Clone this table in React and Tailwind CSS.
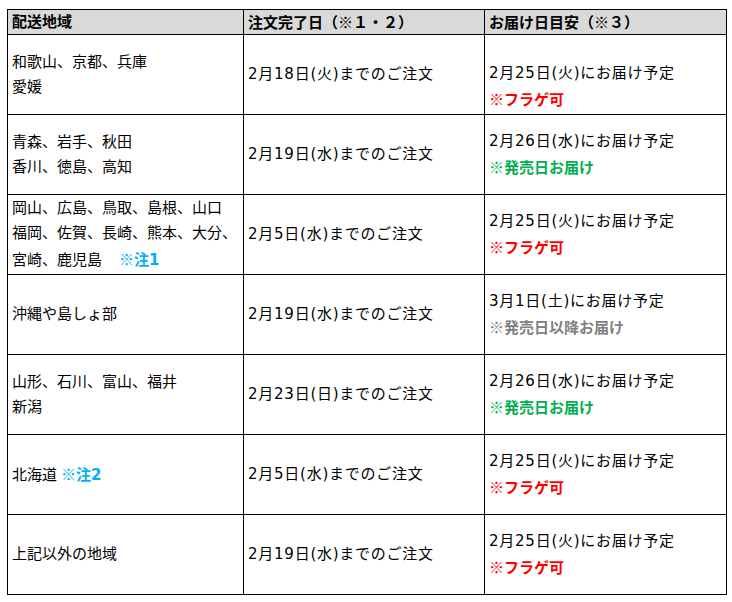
import React from 'react';

// ※ taken from the CJK font so it stays full width
const Mark = () => <span className="font-['Noto_Sans_CJK_JP']">※</span>;

const rows = [
  {
    area: [['和歌山、京都、兵庫'], ['愛媛']],
    deadline: '2月18日(火)までのご注文',
    eta: '2月25日(火)にお届け予定',
    note: { text: 'フラゲ可', color: 'text-[#ff0000]' },
    blankTop: true,
  },
  {
    area: [['青森、岩手、秋田'], ['香川、徳島、高知']],
    deadline: '2月19日(水)までのご注文',
    eta: '2月26日(水)にお届け予定',
    note: { text: '発売日お届け', color: 'text-[#00b050]' },
  },
  {
    area: [['岡山、広島、鳥取、島根、山口'], ['福岡、佐賀、長崎、熊本、大分、'], ['宮崎、鹿児島', '注1', 'wide']],
    deadline: '2月5日(水)までのご注文',
    eta: '2月25日(火)にお届け予定',
    note: { text: 'フラゲ可', color: 'text-[#ff0000]' },
  },
  {
    area: [['沖縄や島しょ部']],
    deadline: '2月19日(水)までのご注文',
    eta: '3月1日(土)にお届け予定',
    note: { text: '発売日以降お届け', color: 'text-[#808080]' },
  },
  {
    area: [['山形、石川、富山、福井'], ['新潟']],
    deadline: '2月23日(日)までのご注文',
    eta: '2月26日(水)にお届け予定',
    note: { text: '発売日お届け', color: 'text-[#00b050]' },
  },
  {
    area: [['北海道', '注2', 'narrow']],
    deadline: '2月5日(水)までのご注文',
    eta: '2月25日(火)にお届け予定',
    note: { text: 'フラゲ可', color: 'text-[#ff0000]' },
  },
  {
    area: [['上記以外の地域']],
    deadline: '2月19日(水)までのご注文',
    eta: '2月25日(火)にお届け予定',
    note: { text: 'フラゲ可', color: 'text-[#ff0000]' },
  },
];

export default function App() {
  return (
    <div
      className="w-[732px] h-[602px] bg-white pt-[9px] pl-[7px] text-[15px] text-black"
      style={{ fontFamily: '"DejaVu Sans", "Noto Sans CJK JP", sans-serif' }}
    >
      <table className="table-fixed border-collapse w-[719px]">
        <colgroup>
          <col className="w-[236px]" />
          <col className="w-[241px]" />
          <col className="w-[242px]" />
        </colgroup>
        <thead>
          <tr className="h-[25px] bg-[#d9d9d9]">
            <th className="border border-black px-[4px] text-left font-bold leading-[20px]">配送地域</th>
            <th className="border border-black px-[4px] text-left font-bold leading-[20px]">
              注文完了日（<Mark />１・２）
            </th>
            <th className="border border-black px-[4px] text-left font-bold leading-[20px]">
              お届け日目安（<Mark />３）
            </th>
          </tr>
        </thead>
        <tbody>
          {rows.map((r, i) => (
            <tr key={i} className="h-[80px]">
              <td className="border border-black px-[4px] align-middle leading-[25px]">
                {r.area.map((line, j) => (
                  <div key={j} className="whitespace-nowrap">
                    {line[0]}
                    {line[1] && (
                      <span className={`font-bold text-[#00b0f0] ${line[2] === 'wide' ? 'ml-[17px]' : 'ml-[4px]'}`}>
                        <Mark />
                        {line[1]}
                      </span>
                    )}
                  </div>
                ))}
              </td>
              <td className="border border-black px-[4px] align-middle leading-[25px] whitespace-nowrap tracking-[0.75px]">
                {r.deadline}
              </td>
              <td className="border border-black px-[4px] align-middle leading-[25px] whitespace-nowrap">
                {r.blankTop && <div>&nbsp;</div>}
                <div className="tracking-[0.75px]">{r.eta}</div>
                <div className={`font-bold ${r.note.color}`}>
                  <Mark />
                  {r.note.text}
                </div>
              </td>
            </tr>
          ))}
        </tbody>
      </table>
    </div>
  );
}
